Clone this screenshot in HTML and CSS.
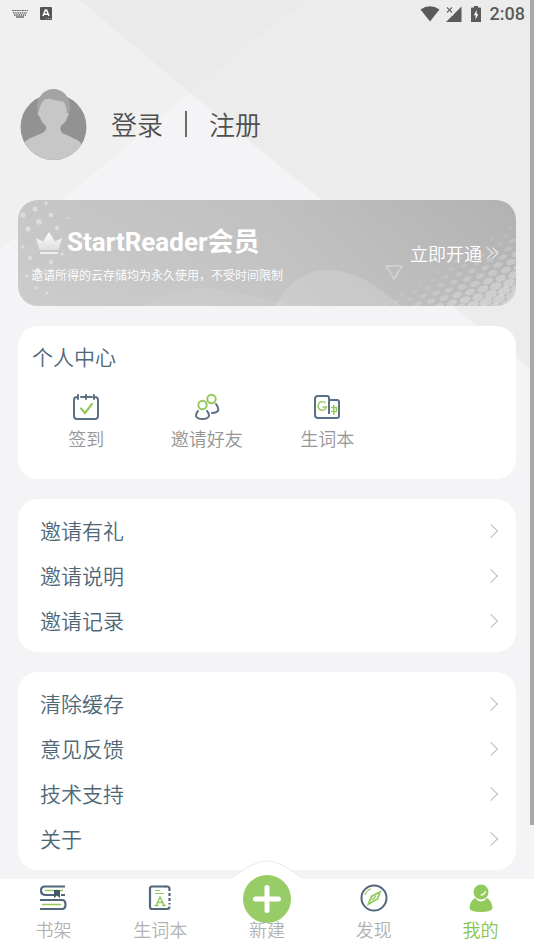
FILE: index.html
```html
<!DOCTYPE html>
<html lang="zh-CN">
<head>
<meta charset="utf-8">
<meta name="viewport" content="width=device-width, initial-scale=1">
<title>我的</title>
<link rel="stylesheet" href="styles.css">
</head>
<body>
<svg class="backdrop" viewBox="0 0 534 400" preserveAspectRatio="xMidYMin slice" aria-hidden="true">
  <path d="M0 0H80L190 93L86 180L0 250Z" fill="#f0f0f0"/>
  <path d="M80 0H534V372L190 93Z" fill="#ececec"/>
  <path d="M80 0H310L267 29L190 93Z" fill="#eaeaea"/>
</svg>
<div class="scrollbar" aria-hidden="true"></div>

<header class="status">
  <svg width="16" height="9" viewBox="0 0 16 9" fill="none" stroke="#666">
    <path d="M0 1.5H16" stroke-dasharray="2 .5"/><path d="M1 3.8H15M2 6H14" stroke-width="1.3" stroke-dasharray="1.6 .6"/><path d="M4 8H12" stroke-width="1.4"/>
  </svg>
  <svg width="12" height="13" viewBox="0 0 12 13">
    <rect width="12" height="13" rx="1" fill="#555"/><path d="M3 9L5.4 3H6.6L9 9M4 7.2H8" fill="none" stroke="#fff" stroke-width="1.5"/><path d="M6 11.5H11" stroke="#bbb" stroke-dasharray="1 1"/>
  </svg>
  <span class="spacer"></span>
  <svg class="wifi" width="20" height="16" viewBox="0 0 20 16"><path d="M.5 3.6Q10-3 19.500 3.600L10 15.500Z" fill="#5a5a5a"/></svg>
  <svg class="signal" width="16" height="16" viewBox="0 0 16 16"><path d="M15.500 .5V16H0Z" fill="#5a5a5a"/><path d="M0 0H8V8L6 10L0 7Z" fill="#ececec"/><path d="M1 1.500L6 6.500M6 1.500L1 6.500" stroke="#666" stroke-width="1.100"/></svg>
  <svg class="battery" width="10" height="16" viewBox="0 0 10 16"><path d="M3 0H7V1.500H9.300Q10 1.500 10 2.200V16H0V2.200Q0 1.500 .7 1.500H3Z" fill="#5a5a5a"/><path d="M5.700 4L2.800 9.300H4.600V13.500L7.300 8H5.700Z" fill="#fff"/></svg>
  <time>2:08</time>
</header>

<main>
  <section class="profile">
    <svg class="avatar" width="67" height="71" viewBox="0 0 67 71" role="img" aria-label="头像">
      <defs><clipPath id="face"><circle cx="33.500" cy="38" r="33"/></clipPath></defs>
      <circle cx="33.500" cy="38" r="33" fill="#929292"/>
      <path d="M18 26C14 9 24 0 33.500 0S53 9 49 26Z" fill="#a4a4a4"/>
      <path d="M18 20L20 30H47L49 20Z" fill="#a4a4a4"/>
      <path clip-path="url(#face)" d="M23 12Q26 9 31 10L44 13Q47 18 47 24Q50 24 47 29C45 34 43 35 41 37C39 41 42 45 47 46L55 50Q61 52 64 59V71H0V58Q5 51 13 48L20 45Q27 43 26 37Q21 33 20 28Q16 25 19 22Q20 16 23 12Z" fill="#c7c7c7"/>
    </svg>
    <nav class="account" aria-label="账户">
      <a href="#login">登录</a>
      <span class="divider"></span>
      <a href="#register">注册</a>
    </nav>
  </section>

  <section class="banner">
    <svg class="banner-art" viewBox="0 0 498 106" preserveAspectRatio="xMidYMid slice" aria-hidden="true">
      <path d="M258 106Q275 70 309 70Q340 70 372 97L384 106Z" fill="#fff" opacity=".14"/>
      <path d="M125 106Q165 83 200 89T276 106Z" fill="#fff" opacity=".08"/>
      <g fill="#fff" opacity=".4"><circle cx="17" cy="9" r="2.500"/><circle cx="28" cy="3" r="1.700"/><circle cx="5" cy="15" r="2.500"/><circle cx="21" cy="22" r="2.700"/><circle cx="33" cy="15" r="2.200"/><circle cx="10" cy="29" r="2.500"/><circle cx="39" cy="28" r="2"/><circle cx="5" cy="47" r="1.700"/><circle cx="12" cy="58" r="2"/><circle cx="33" cy="62" r="2"/><circle cx="20" cy="70" r="2.300"/><circle cx="44" cy="54" r="1.700"/><circle cx="9" cy="76" r="1.500"/><circle cx="31" cy="80" r="1.500"/><circle cx="18" cy="88" r="1.400"/><circle cx="29" cy="93" r="1.300"/><circle cx="50" cy="18" r="1"/></g>
      <g class="halftone" fill="#fff"></g>
      <path d="M368.500 66H384L376 79Z" fill="none" stroke="#fff" stroke-width="1.500" opacity=".35"/>
    </svg>
    <div class="plan">
      <h1>
        <svg width="26" height="25" viewBox="0 0 26 25" aria-hidden="true"><defs><linearGradient id="gold" x2="0" y2="1"><stop stop-color="#fff"/><stop offset="1" stop-color="#ddd"/></linearGradient></defs><path d="M0 8L7 11.500L13 2L19 11.500L26 8L22.500 20H3.500Z" fill="url(#gold)"/><path d="M4 22H22V24H4Z" fill="#eee"/></svg>
        StartReader会员
      </h1>
      <p>邀请所得的云存储均为永久使用，不受时间限制</p>
    </div>
    <a class="open" href="#open">立即开通
      <svg width="13" height="12" viewBox="0 0 13 12" fill="none" stroke="#fff" stroke-width="1"><path d="M1 .5L6.500 6L1 11.500M6.500 .5L12 6L6.500 11.500"/></svg>
    </a>
  </section>

  <section class="card center">
    <h2>个人中心</h2>
    <div class="tiles">
      <a href="#checkin">
        <svg width="28" height="28" viewBox="0 0 28 28" fill="none" stroke="#5b7083" stroke-width="2" stroke-linecap="round"><path d="M5 4Q2 4 2 7V23Q2 26 5 26H23Q26 26 26 23V7Q26 4 23 4M9 4H20M6 2V6M14 2V6M22 2V6"/><path d="M9 15.500L13 20L20 11" stroke="#92ca5c" stroke-width="2.200"/></svg>
        签到
      </a>
      <a href="#friends">
        <svg width="28" height="28" viewBox="0 0 28 28" fill="none" stroke="#5b7083" stroke-width="2" stroke-linecap="round"><circle cx="9.500" cy="12" r="4.200" stroke="#92ca5c"/><circle cx="18.500" cy="6" r="4.200" stroke="#92ca5c"/><path d="M5 18Q3 20 3 23Q4 26 9.500 26T16 23Q16 20 14 18M23 11Q26 15 25 18Q23 20 19 20"/></svg>
        邀请好友
      </a>
      <a href="#words">
        <svg width="28" height="28" viewBox="0 0 28 28" fill="none" stroke="#5b7083" stroke-width="2"><path d="M16 8V5Q16 3 14 3H5Q2 3 2 6V22Q2 25 5 25H24Q26 25 26 23V9Q26 7 24 7H16V21"/><path d="M12.500 10A4.300 4.300 0 1 0 13.500 14H9.500M18 14.500H23.500V18.500H18M20.700 12V22" stroke="#92ca5c" stroke-width="1.400"/></svg>
        生词本
      </a>
    </div>
  </section>

  <nav class="card list" aria-label="邀请">
    <a href="#gift">邀请有礼</a>
    <a href="#rules">邀请说明</a>
    <a href="#history">邀请记录</a>
  </nav>

  <nav class="card list" aria-label="设置">
    <a href="#cache">清除缓存</a>
    <a href="#feedback">意见反馈</a>
    <a href="#support">技术支持</a>
    <a href="#about">关于</a>
  </nav>
</main>

<nav class="tabs" aria-label="主导航">
  <svg class="hump" width="76" height="20" viewBox="0 0 76 20" aria-hidden="true"><path d="M0 20Q8 16 16 10Q29 2 38 2T60 10Q68 16 76 20Z" fill="#fff"/><path d="M2 19Q9 15 16 10Q29 2 38 2T60 10Q67 15 74 19" fill="none" stroke="#ece8e5"/></svg>
  <a href="#shelf">
    <svg width="28" height="28" viewBox="0 0 28 28" fill="none" stroke="#52677c" stroke-width="2.200"><path d="M26 2.500H6Q2 2.500 2 6.500T6 11H15M22 11H26M1 16H23Q26.500 16 26.500 20.500T23 25H1"/><path d="M6 6.500H24M3 20.500H22" stroke="#92ca5c" stroke-width="1.300"/><path d="M15 6H21V14L18 11.500L15 14Z" fill="#41566b" stroke="none"/></svg>
    书架
  </a>
  <a href="#wordbook">
    <svg width="28" height="28" viewBox="0 0 28 28" fill="none" stroke="#52677c" stroke-width="2.200"><path d="M20 2.500H6Q4 2.500 4 4.500V23Q4 25 6 25H20"/><path d="M19 2.500H21Q23.500 2.500 23.500 5V7M23.500 9V12M23.500 14V17M23.500 19V20.500M23.500 22.500Q23.500 25 21 25H19"/><path d="M9 6.500H14M9 9.500H18" stroke="#92ca5c" stroke-width="1.200"/><path d="M10.500 21L14 13L18 21M12 18.500H16.500M8.500 21.500H12.500M16 21.500H20" stroke="#92ca5c" stroke-width="1.500"/></svg>
    生词本
  </a>
  <a class="create" href="#new">
    <svg width="48" height="48" viewBox="0 0 48 48" aria-hidden="true"><circle cx="24" cy="24" r="24" fill="#98cc66"/><path d="M24 12.500V35.500M12.500 24H35.500" stroke="#fff" stroke-width="5" stroke-linecap="round"/></svg>
    <span>新建</span>
  </a>
  <a href="#discover">
    <svg width="28" height="28" viewBox="0 0 28 28" fill="none" stroke="#52677c" stroke-width="2"><circle cx="14" cy="14" r="12.500"/><path d="M20 8L17.500 15L8.500 20L11.500 12.500Z" stroke="#92ca5c" stroke-width="1.800"/><path d="M16 12L12 16" stroke="#92ca5c" stroke-width="1.300"/><path d="M5 11Q7 6 11 5" stroke="#92ca5c" stroke-width="1.200"/></svg>
    发现
  </a>
  <a class="current" href="#me" aria-current="page">
    <svg width="28" height="28" viewBox="0 0 28 28" fill="#92ca5c"><path d="M8 14Q11 17.500 14 17.500T20 14Q25 17 25.500 24Q25 28 14 28T2.500 24Q3 17 8 14Z"/><circle cx="14" cy="8" r="7.500"/><path d="M13.500 11Q17.500 11 18.500 7" fill="none" stroke="#fff" stroke-width="1.200"/></svg>
    我的
  </a>
</nav>
<script src="script.js"></script>
</body>
</html>
```
FILE: styles.css
```css
* { box-sizing: border-box; }
body {
  margin: 0;
  min-height: 100vh;
  display: flex;
  flex-direction: column;
  position: relative;
  background: #f4f4f6;
  font-family: "Noto Sans CJK SC", Roboto, sans-serif;
  font-weight: 350;
  color: #4e6878;
}
a { color: inherit; text-decoration: none; }
h1, h2, p { margin: 0; font-weight: inherit; }
svg { display: block; flex: none; }
.backdrop { position: absolute; top: 0; left: 0; width: 100%; z-index: -1; }
.scrollbar { position: absolute; top: 0; right: 0; width: 4px; height: 825px; background: #a9a9a9; }

.status { display: flex; align-items: center; height: 27px; padding: 0 9px 0 12px; gap: 12px; }
.spacer { flex: 1; }
.status .signal { margin-left: -6px; }
.status .battery { margin-left: -3px; }
.status time { font-family: Roboto, sans-serif; font-size: 18px; font-weight: 500; line-height: 27px; color: #5a5a5a; margin-left: -3px; }

main { flex: 1; display: flex; flex-direction: column; gap: 20px; padding: 62px 18px 9px; }

.profile { display: flex; align-items: center; gap: 24px; height: 91px; padding: 0 2px 20px; }
.account { display: flex; align-items: center; gap: 22px; font-size: 26px; line-height: 34px; padding-bottom: 2px; color: #505050; }
.divider { width: 2px; height: 26px; background: #6c6c6c; }

.banner {
  position: relative;
  display: flex;
  align-items: center;
  justify-content: space-between;
  height: 106px;
  padding: 0 17px 0 13px;
  border-radius: 20px;
  overflow: hidden;
  color: #fff;
  background: linear-gradient(165deg, rgba(0, 0, 0, .03), rgba(255, 255, 255, .12)), linear-gradient(90deg, #cdcdcd, #c2c2c2 50%, #afafaf);
}
.banner-art { position: absolute; inset: 0; width: 100%; height: 100%; }
.plan, .open { position: relative; }
.plan { display: flex; flex-direction: column; gap: 6px; padding-top: 2px; }
.plan h1 { display: flex; align-items: center; gap: 5px; padding-left: 5px; font-family: Roboto, "Noto Sans CJK SC", sans-serif; font-size: 26px; font-weight: 700; line-height: 36px; }
.plan p { font-size: 12px; line-height: 18px; }
.open { display: flex; align-items: center; gap: 4px; font-size: 18px; line-height: 26px; }

.card { background: #fff; border-radius: 20px; }
.center { height: 153px; padding: 15px 14px; }
.center h2 { font-size: 21px; line-height: 30px; }
.tiles { display: grid; grid-template-columns: repeat(4, 1fr); margin: 22px -6px 0; }
.tiles a { display: flex; flex-direction: column; align-items: center; gap: 4px; font-size: 18px; line-height: 26px; color: #969696; }

.list { display: flex; flex-direction: column; padding: 9px 20px 9px 22px; }
.list a { display: flex; align-items: center; justify-content: space-between; font-size: 21px; line-height: 45px; }
.list a::after { content: ""; width: 9px; height: 9px; border: solid #bcbcbc; border-width: 1px 1px 0 0; transform: rotate(45deg); }

.tabs { position: relative; display: grid; grid-template-columns: repeat(5, 1fr); height: 71px; background: #fff; }
.hump { position: absolute; left: 50%; bottom: 100%; margin-left: -38px; }
.tabs a { display: flex; flex-direction: column; align-items: center; gap: 4px; padding-top: 5px; font-size: 18px; line-height: 26px; color: #b2b2b2; }
.tabs .current { color: #86c34e; }
.tabs .create { position: relative; justify-content: flex-end; padding: 0 0 8px; }
.create svg { position: absolute; top: -4px; }
.create span { position: relative; }
```
FILE: script.js
```js
// Halftone field: skewed rows of ellipses that grow toward the lower right corner.
const field = document.querySelector('.halftone');
const ns = 'http://www.w3.org/2000/svg';
for (let i = -20; i < 35; i++) {
  for (let j = -20; j < 20; j++) {
    const x = 452 + i * 13 - j * 5;
    const y = 92 - i * 3 + j * 8;
    const edge = 98 - Math.max(0, x - 370) * 0.6;
    const depth = Math.min(1, (y - edge) / 60);
    if (x < 362 || x > 508 || y > 114 || depth <= 0) continue;
    const dot = document.createElementNS(ns, 'ellipse');
    dot.setAttribute('rx', 2 + depth * 4.5);
    dot.setAttribute('ry', 1 + depth * 3);
    dot.setAttribute('opacity', 0.08 + depth * 0.24);
    dot.setAttribute('transform', `translate(${x} ${y}) rotate(-20)`);
    field.append(dot);
  }
}
```
